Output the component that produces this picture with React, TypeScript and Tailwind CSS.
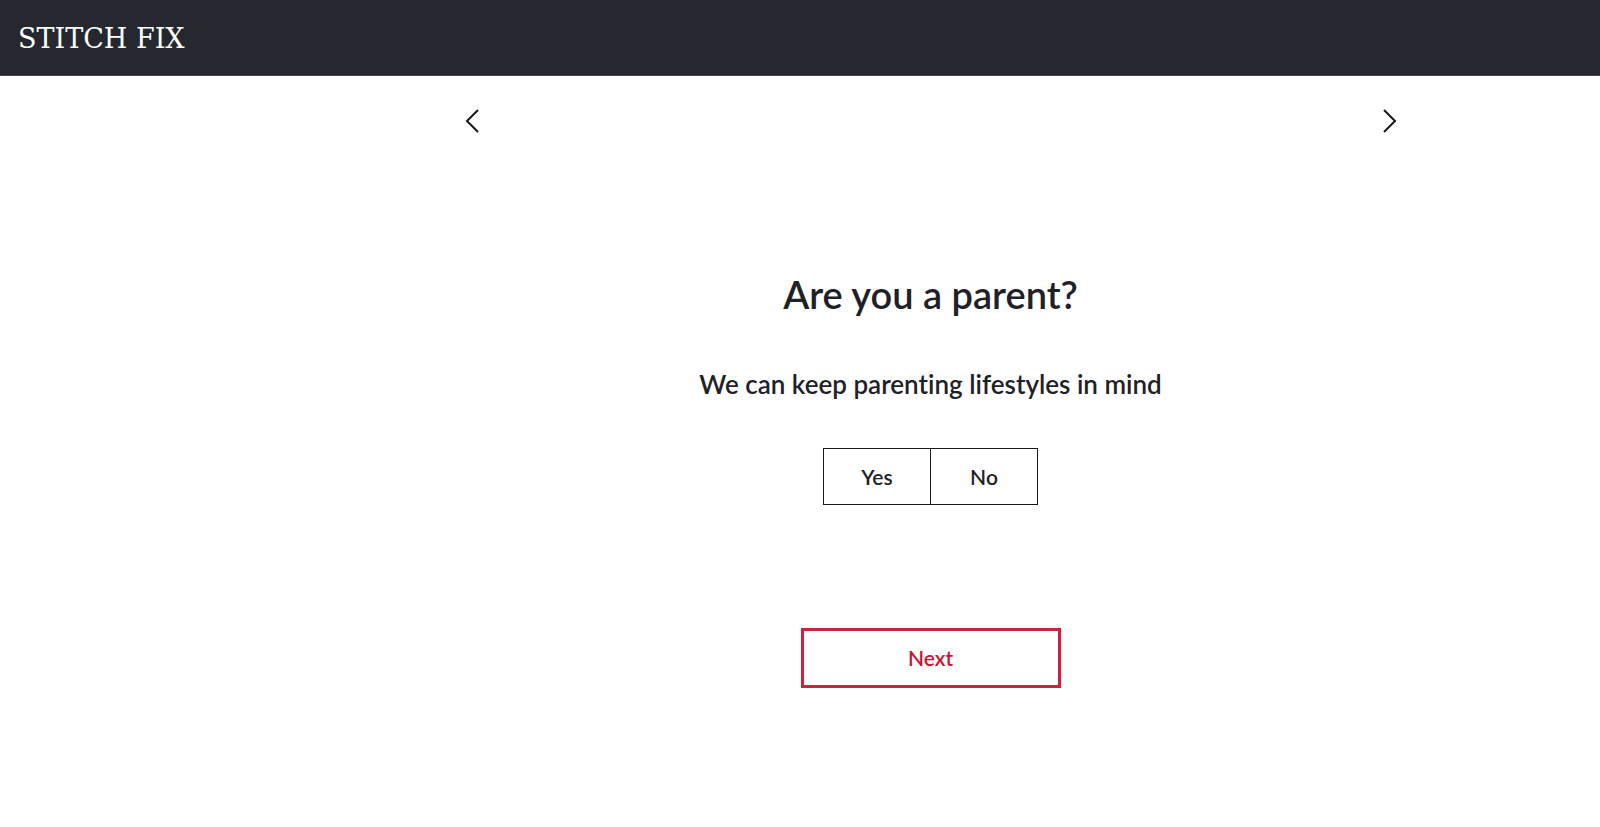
import { useState } from 'react'

interface ArrowButtonProps {
  label: string
  points: string
}

const ANSWERS = ['Yes', 'No']

function ArrowButton({ label, points }: ArrowButtonProps): React.JSX.Element {
  return (
    <button type="button" aria-label={label} className="cursor-pointer">
      <svg width="14" height="24" viewBox="0 0 14 24" fill="none" stroke="#16181f" strokeWidth="2">
        <polyline points={points} />
      </svg>
    </button>
  )
}

function Header(): React.JSX.Element {
  return (
    <header className="flex h-[76px] items-center border-b border-[#4a4450] bg-[#25282e] px-[18px] pt-0.5">
      <a
        href="#"
        className="font-['DejaVu_Serif','Liberation_Serif',serif] text-[27px] leading-8 text-white"
      >
        STITCH FIX
      </a>
    </header>
  )
}

export default function App(): React.JSX.Element {
  const [answer, setAnswer] = useState<string | null>(null)

  return (
    <div className="min-h-screen bg-white font-[Lato,'Liberation_Sans',sans-serif] text-[#1f2128] [font-variant-ligatures:none]">
      <Header />

      <main className="pl-[261px]">
        <div className="mx-auto flex max-w-[932px] flex-col items-center pt-[33px]">
          {/* Previous / next question */}
          <nav className="flex w-full justify-between">
            <ArrowButton label="Previous question" points="13,1 2,12 13,23" />
            <ArrowButton label="Next question" points="1,1 12,12 1,23" />
          </nav>

          <h1 className="mt-[137px] text-[38px] leading-12 font-semibold">Are you a parent?</h1>
          <p className="mt-[50px] text-[26px] leading-8 font-semibold">
            We can keep parenting lifestyles in mind
          </p>

          <div role="group" aria-label="Are you a parent?" className="mt-12 flex border border-[#16181f]">
            {ANSWERS.map((item) => (
              <button
                key={item}
                type="button"
                aria-pressed={answer === item}
                onClick={() => setAnswer(item)}
                className="h-[55px] w-[107px] cursor-pointer border-l border-[#16181f] text-[21px] font-semibold first:w-[106px] first:border-l-0 aria-pressed:bg-gray-100"
              >
                {item}
              </button>
            ))}
          </div>

          <button
            type="button"
            className="mt-[123px] h-[60px] w-[260px] cursor-pointer border-3 border-[#d0203c] text-[21px] font-semibold text-[#cb1230]"
          >
            Next
          </button>
        </div>
      </main>
    </div>
  )
}
